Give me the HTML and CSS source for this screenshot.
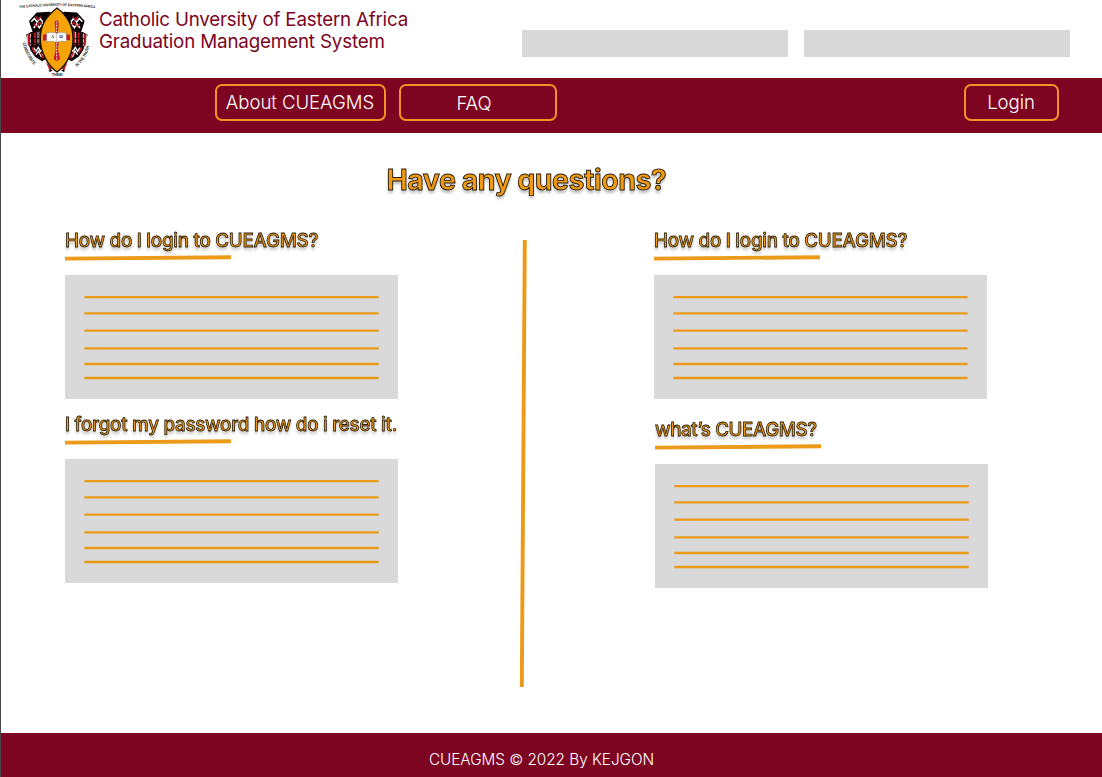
FILE: index.html
```html
<!DOCTYPE html>
<html lang="en">
<head>
<meta charset="utf-8">
<title>CUEAGMS FAQ</title>
<link rel="stylesheet" href="styles.css">
</head>
<body>
<svg class="defs" width="0" height="0" aria-hidden="true">
  <defs>
    <g id="answer-lines" stroke="#ec9a1a" stroke-width="2.3">
      <path d="M19.3 22.1H313.7M19.3 38.4H313.7M19.3 55.6H313.7M19.3 73.3H313.7M19.3 89H313.7M19.3 103H313.7"/>
    </g>
    <path id="rule" d="M0 3.6L166 2.2" stroke="#ec9a1a" stroke-width="3.9"/>
    <g id="shield-side">
      <path d="M91 64L111 41L149 39L160 52L158 98L102 98Z" fill="#090506" stroke="#090506" stroke-width="7" stroke-linejoin="round"/>
      <path d="M78 104L93 96H140V176L126 184L105 170L91 150Z" fill="#160809"/>
      <path d="M94 65L103 55L111 66L120 55L128 66M101 84L110 72L118 83L127 70L134 82" fill="none" stroke="#fff" stroke-width="4.5"/>
      <path d="M108 49L114 60L123 50M101 70L109 80L119 67L129 77" fill="none" stroke="#bd1d28" stroke-width="4"/>
      <path d="M82 104V132M91 101V137M114 96V132" stroke="#e9d4d2" stroke-width="3"/>
      <path d="M86 102V137M105 98V136M119 94V135" stroke="#c51e2a" stroke-width="5"/>
      <path d="M88 116H119M88 130H123" stroke="#160809" stroke-width="3"/>
      <path d="M101 143L108 154L115 142L122 154L129 145M108 164L116 153L123 169L132 160" fill="none" stroke="#fff" stroke-width="4"/>
      <path d="M96 142L104 158M121 158L130 174" stroke="#c51e2a" stroke-width="5"/>
      <path d="M147 204L158 212L148 216Z" fill="#080506"/>
      <path d="M138 187L158 205L148 210Z" fill="#bd1d28"/>
      <path d="M91 38L111 53M71 51L90 47" stroke="#bbb" stroke-width="1" stroke-dasharray="4 4"/>
    </g>
  </defs>
</svg>

<header class="masthead">
  <div class="brand">
    <svg class="crest" viewBox="48 0 252 234" role="img" aria-label="University crest">
      <defs>
        <path id="arc-top" d="M58 25Q170 11 289 25"/>
        <path id="arc-left" d="M68 129Q77 169 103 196"/>
        <path id="arc-right" d="M231 201Q261 174 269 137"/>
      </defs>
      <use href="#shield-side"/>
      <use href="#shield-side" transform="translate(341 0) scale(-1 1)"/>
      <path d="M171 24C131 55 121 83 121 116C121 157 144 197 171 216C202 192 219 157 219 116C219 78 202 47 171 24Z" fill="#f5a30b" stroke="#17100a" stroke-width="4"/>
      <path d="M164 66Q170 56 176 66L174 99H187L210 105V121L187 119L176 122L174 149L180 177Q170 187 161 177L167 149L165 122L151 119L129 122V104L151 100H167Z" fill="#c71928"/>
      <path d="M170 65V179" stroke="#fff" stroke-width="3" stroke-dasharray="5 4"/>
      <path d="M140 99Q157 94 170 100Q184 94 199 99V125Q184 121 170 127Q156 121 140 125Z" fill="#fff" stroke="#777" stroke-width="1.5"/>
      <path d="M170 100V127" stroke="#555" stroke-width="1"/>
      <text class="crest-letter" x="153" y="114">A</text>
      <text class="crest-letter" x="178" y="114">Ω</text>
      <text class="crest-text"><textPath href="#arc-top" textLength="228" lengthAdjust="spacingAndGlyphs">THE CATHOLIC UNIVERSITY OF EASTERN AFRICA</textPath></text>
      <text class="crest-text crest-motto"><textPath href="#arc-left" textLength="74" lengthAdjust="spacingAndGlyphs">CONSECRATE</textPath></text>
      <text class="crest-text crest-motto"><textPath href="#arc-right" textLength="73" lengthAdjust="spacingAndGlyphs">IN THE TRUTH</textPath></text>
      <text class="crest-text" x="155" y="228" textLength="32" lengthAdjust="spacingAndGlyphs">THEM</text>
    </svg>
    <div class="brand-name"><span>Catholic Unversity of Eastern Africa</span><span class="brand-system">Graduation Management System</span></div>
  </div>
  <div class="placeholders"><div class="placeholder"></div><div class="placeholder"></div></div>
</header>

<nav class="navbar">
  <div class="nav-links">
    <a class="nav-button about">About CUEAGMS</a>
    <a class="nav-button faq">FAQ</a>
  </div>
  <a class="nav-button login">Login</a>
</nav>

<main class="content">
  <h1 class="title">Have any questions?</h1>
  <div class="columns">
    <section class="column">
      <article class="question">
        <h2 class="heading">How do I login to CUEAGMS?</h2>
        <svg class="underline"><use href="#rule"/></svg>
        <svg class="answer"><use href="#answer-lines"/></svg>
      </article>
      <article class="question">
        <h2 class="heading">I forgot my password how do i reset it.</h2>
        <svg class="underline"><use href="#rule"/></svg>
        <svg class="answer"><use href="#answer-lines"/></svg>
      </article>
    </section>
    <svg class="divider"><path d="M5.8 0L2.8 447" stroke="#ec9a1a" stroke-width="3.9"/></svg>
    <section class="column column-right">
      <article class="question">
        <h2 class="heading">How do I login to CUEAGMS?</h2>
        <svg class="underline"><use href="#rule"/></svg>
        <svg class="answer"><use href="#answer-lines"/></svg>
      </article>
      <article class="question inset">
        <h2 class="heading heading-short">what’s CUEAGMS?</h2>
        <svg class="underline"><use href="#rule"/></svg>
        <svg class="answer"><use href="#answer-lines"/></svg>
      </article>
    </section>
  </div>
</main>

<footer class="footer">CUEAGMS © 2022 By KEJGON</footer>
</body>
</html>
```
FILE: styles.css
```css
* { box-sizing: border-box; }

body {
  margin: 0;
  width: 1102px;
  height: 777px;
  display: flex;
  flex-direction: column;
  overflow: hidden;
  background: #fff;
  border-left: 1px solid #4a4548;
  font-family: Inter, "Liberation Sans", sans-serif;
}

svg { display: block; }
.defs { position: absolute; }

.masthead {
  height: 77.5px;
  flex: none;
  display: flex;
  justify-content: space-between;
  padding: 0 32px 0 15px;
}
.brand { display: flex; }
.crest { width: 84px; height: 78px; }
.crest-text { font: 700 11px "Liberation Sans", sans-serif; fill: #222; }
.crest-motto { font-size: 13px; }
.crest-letter { font: 700 13px "Liberation Serif", serif; fill: #222; }
.brand-name {
  display: flex;
  flex-direction: column;
  padding-top: 8.5px;
  margin-left: -1px;
  color: #7d0522;
  font-size: 18.8px;
  line-height: 22px;
  letter-spacing: -.22px;
  white-space: nowrap;
}
.brand-system { letter-spacing: -.17px; }
.placeholders { display: flex; gap: 15.5px; padding-top: 30px; }
.placeholder { width: 266.5px; height: 27.3px; background: #d9d9d9; }

.navbar {
  height: 55px;
  flex: none;
  display: flex;
  justify-content: space-between;
  padding: 6px 43.5px 0 213.5px;
  background: #7d0522;
}
.nav-links { display: flex; gap: 13px; }
.nav-button {
  height: 37px;
  display: flex;
  align-items: center;
  justify-content: center;
  border: 2px solid #f29222;
  border-radius: 7px;
  color: #fff;
  font-size: 18.6px;
  font-weight: 350;
  letter-spacing: -.06px;
  white-space: nowrap;
}
.about { width: 171px; }
.faq { width: 158px; margin-top: .5px; padding-right: 7px; }
.login { width: 95px; }

.content { height: 600px; flex: none; padding: 29.5px 0 0 64.3px; }
.title, .heading {
  margin: 0;
  color: #f29a12;
  -webkit-text-stroke: .9px #2b210f;
  text-shadow: 0 3px 3px rgba(0, 0, 0, .28);
  white-space: nowrap;
  will-change: transform;
}
.title {
  height: 78px;
  padding-left: 321.5px;
  font-size: 28.6px;
  line-height: 36px;
  letter-spacing: -.55px;
  font-weight: 700;
}
.columns { display: grid; grid-template-columns: 454px 8px 1fr; }
.column { display: flex; flex-direction: column; gap: 14.5px; margin-top: -11px; }
.column-right { gap: 19.5px; padding-left: 126.7px; }
.inset { padding-left: .8px; }
.heading {
  height: 26px;
  line-height: 24px;
  font-size: 18.8px;
  font-weight: 500;
  letter-spacing: -.26px;
  -webkit-text-stroke-width: .8px;
}
.heading-short { letter-spacing: -.4px; }
.underline { width: 168px; height: 7px; }
.answer { width: 333.2px; height: 123.5px; margin-top: 13px; background: #d9d9d9; }
.divider { width: 8px; height: 447px; }

.footer {
  flex: 1;
  display: flex;
  justify-content: center;
  padding: 16px 20px 0 0;
  background: #7d0522;
  color: #fff;
  font-size: 15.3px;
  line-height: 21px;
  font-weight: 350;
  letter-spacing: -.02px;
}
```
